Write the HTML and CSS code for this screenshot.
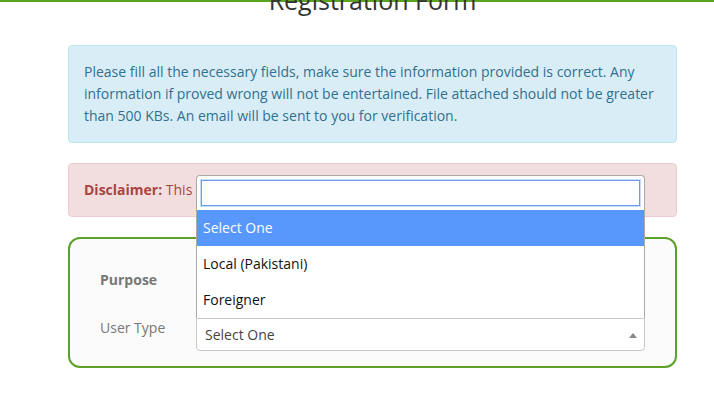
FILE: index.html
```html
<!DOCTYPE html>
<html lang="en">
<head>
    <meta charset="UTF-8">
    <meta name="viewport" content="width=device-width, initial-scale=1.0">
    <title>Registration Form</title>
    <link rel="stylesheet" href="styles.css">
</head>
<body>
    <div class="top-line"></div>
    <div class="container">
        <h2 class="page-title">Registration Form</h2>

        <div class="alert alert-info">
            Please fill all the necessary fields, make sure the information provided is correct. Any
            information if proved wrong will not be entertained. File attached should not be greater
            than 500 KBs. An email will be sent to you for verification.
        </div>

        <div class="alert alert-danger">
            <strong>Disclaimer:</strong> This registration is subject to verification.
        </div>

        <div class="form-box">
            <div class="form-row">
                <label class="row-label bold">Purpose</label>
                <!-- covered by the open dropdown -->
                <div class="select-box"></div>
            </div>
            <div class="form-row">
                <label class="row-label">User Type</label>
                <div class="select-wrap">
                    <div class="select-box open">
                        <span class="select-text">Select One</span>
                        <span class="select-arrow"></span>
                    </div>
                    <div class="dropdown">
                        <div class="dropdown-search">
                            <input type="text" class="search-field">
                        </div>
                        <ul class="options">
                            <li class="highlighted">Select One</li>
                            <li>Local (Pakistani)</li>
                            <li>Foreigner</li>
                        </ul>
                    </div>
                </div>
            </div>
        </div>
    </div>
</body>
</html>
```

FILE: styles.css
```css
body {
    margin: 0;
    padding: 0;
    font-family: "Open Sans", "Liberation Sans", sans-serif;
    font-size: 14px;
    color: #333;
    background-color: #fff;
}

.top-line {
    height: 2px;
    background-color: #5aa51d;
}

.container {
    width: 609px;
    margin-left: 68px;
}

.page-title {
    margin: -15px 0 30px;
    font-size: 25px;
    font-weight: 400;
    line-height: 1.1;
    text-align: center;
    color: #333;
}

.alert {
    padding: 15px;
    margin-bottom: 20px;
    border: 1px solid transparent;
    border-radius: 4px;
    line-height: 22px;
}

.alert-info {
    background-color: #d9edf7;
    border-color: #bce8f1;
    color: #31708f;
}

.alert-danger {
    background-color: #f2dede;
    border-color: #ebccd1;
    color: #a94442;
}

.form-box {
    border: 2px solid #5ba12a;
    border-radius: 12px;
    background-color: #fbfbfb;
    padding: 31px 30px 15px;
    display: flex;
    flex-direction: column;
    gap: 15px;
}

.form-row {
    display: grid;
    grid-template-columns: 96px 1fr;
}

.row-label {
    color: #777;
    line-height: 20px;
}

.row-label.bold {
    font-weight: 700;
}

.select-wrap {
    position: relative;
}

.select-box {
    height: 33px;
    box-sizing: border-box;
    border: 1px solid #c8c8c8;
    border-radius: 4px;
    background-color: #fff;
    display: flex;
    align-items: center;
    justify-content: space-between;
    padding: 0 7px 0 8px;
    color: #444;
}

.select-box.open {
    border-top-left-radius: 0;
    border-top-right-radius: 0;
}

.select-arrow {
    width: 0;
    height: 0;
    border-left: 4px solid transparent;
    border-right: 4px solid transparent;
    border-bottom: 5px solid #888;
    margin-top: 2px;
}

.dropdown {
    position: absolute;
    left: 0;
    right: 0;
    bottom: 100%;
    background-color: #fff;
    border: 1px solid #aaa;
    border-bottom: none;
    border-radius: 4px 4px 0 0;
}

.dropdown-search {
    padding: 4px;
}

.search-field {
    display: block;
    width: 100%;
    height: 26px;
    box-sizing: border-box;
    margin: 0;
    border: 1px solid #6e9ce8;
    box-shadow: 0 0 0 1px rgba(88, 151, 251, 0.35);
    outline: none;
    font-family: inherit;
    font-size: 14px;
}

.options {
    list-style: none;
    margin: 0;
    padding: 0;
}

.options li {
    padding: 6px;
    line-height: 24px;
    color: #111;
}

.options li.highlighted {
    background-color: #5897fb;
    color: #fff;
}
```
